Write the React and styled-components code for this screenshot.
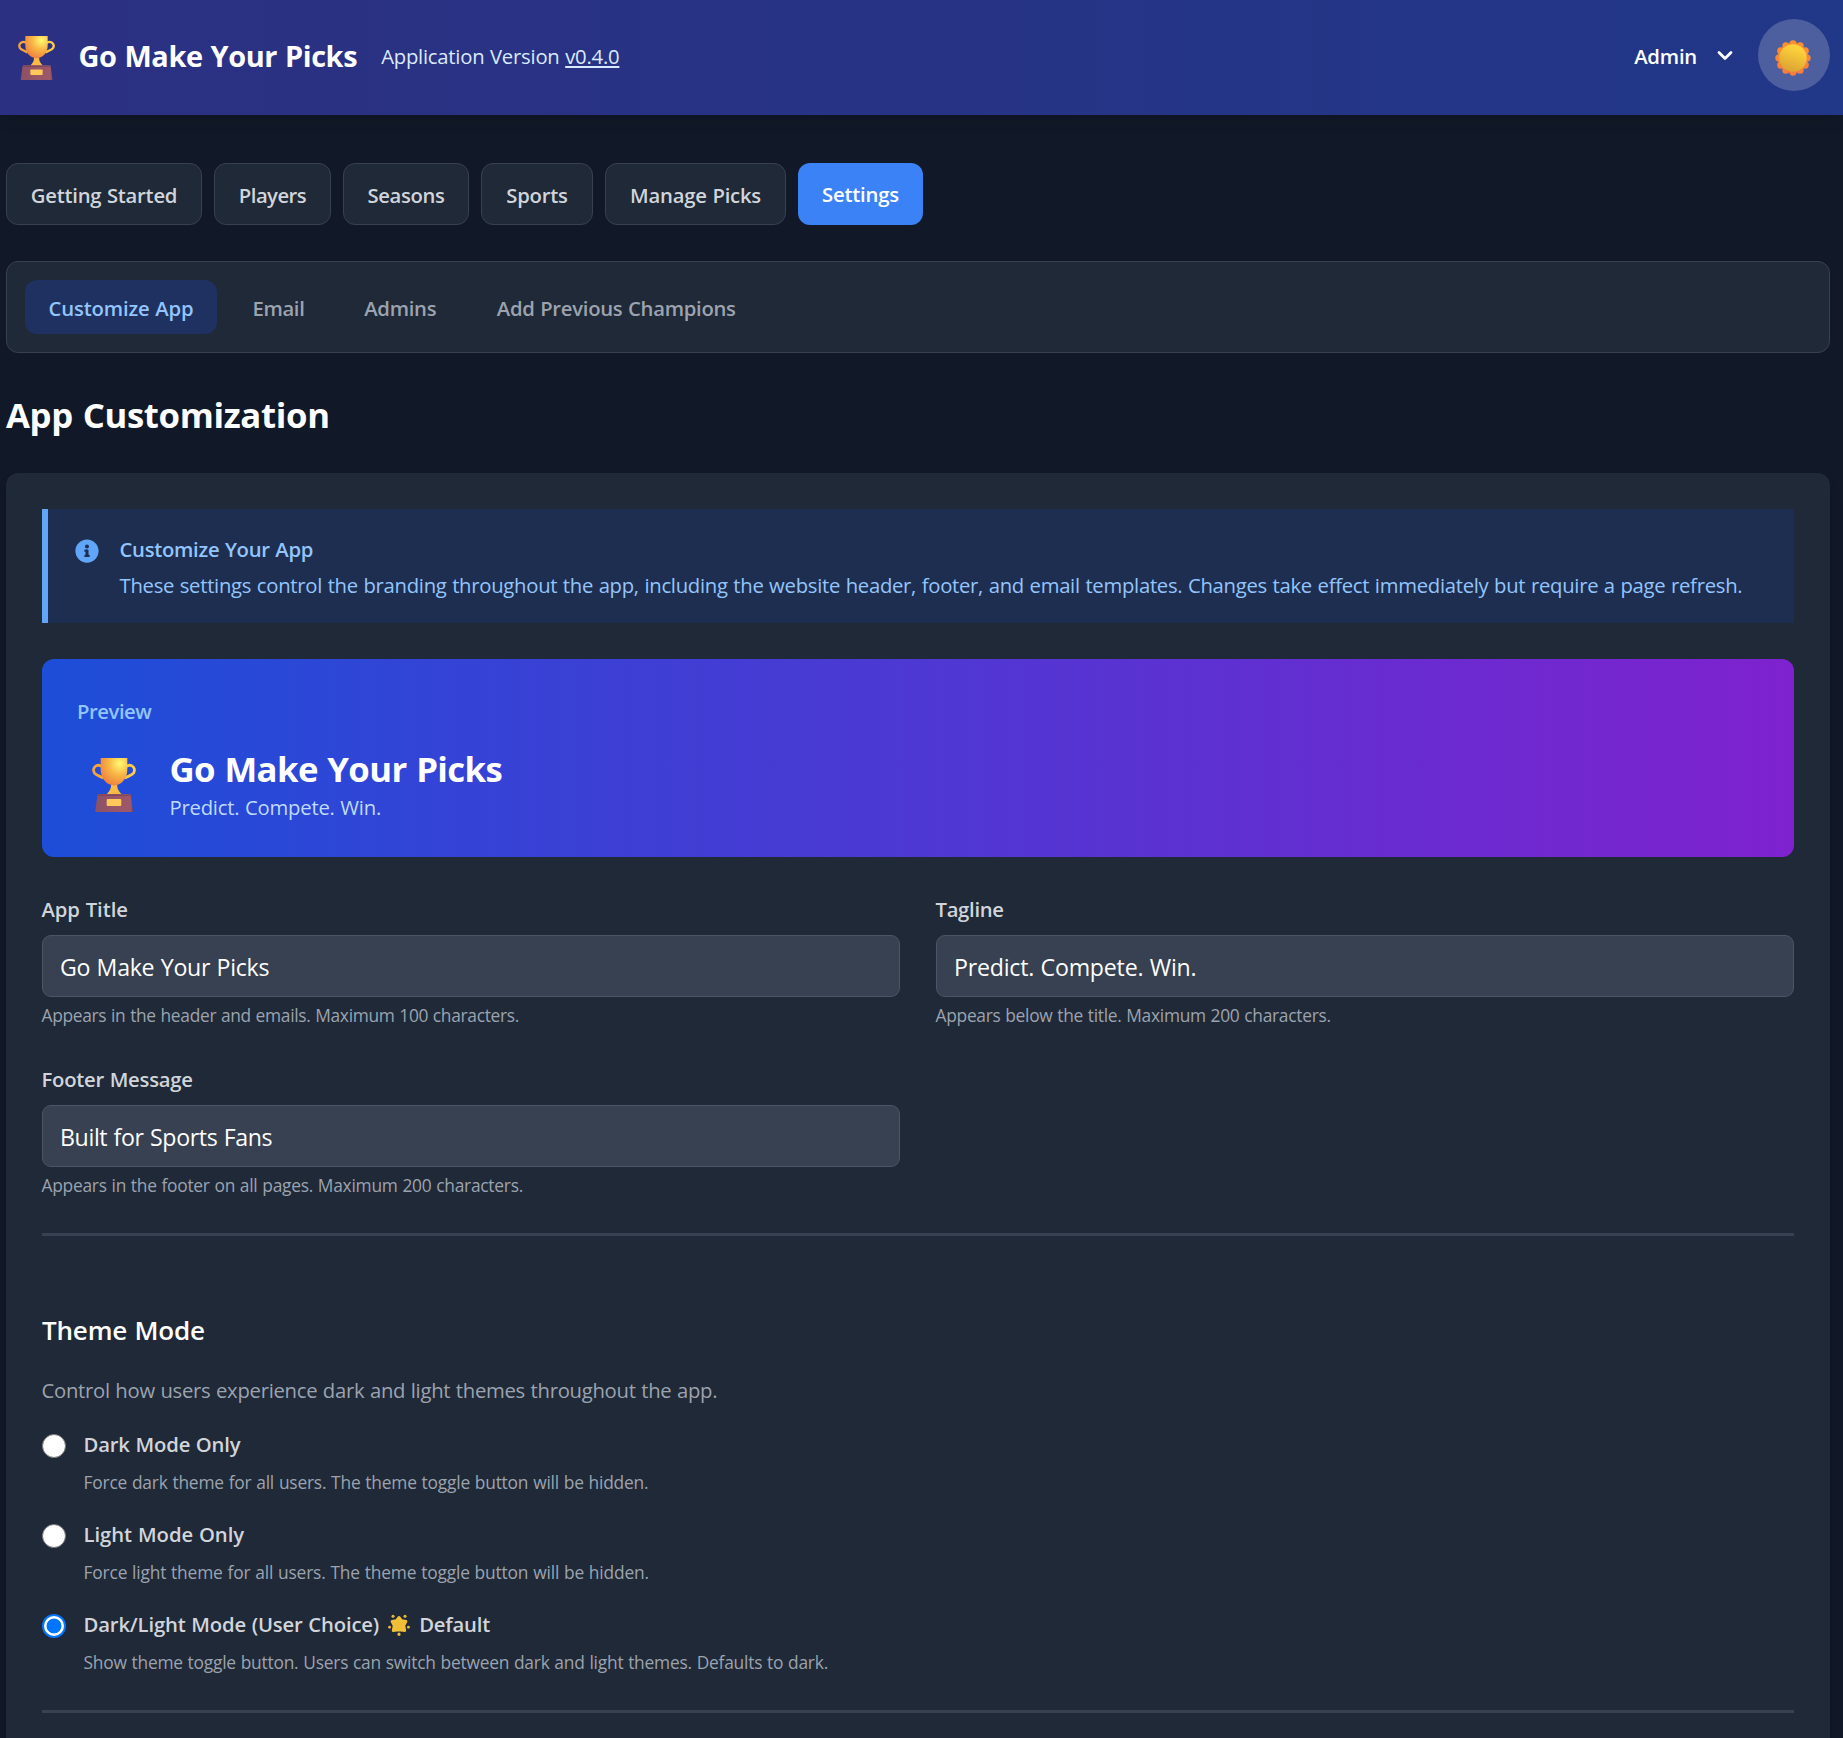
import React, { useState } from "react";
import styled, { createGlobalStyle, css } from "styled-components";
import { FaInfoCircle } from "react-icons/fa";

const GlobalStyle = createGlobalStyle`
  *, *::before, *::after { box-sizing: border-box; }
  html, body { height: 100%; }
  body {
    margin: 0;
    overflow: hidden;
    background: #111827;
    color: #fff;
    font-family: "Open Sans", "Noto Sans", sans-serif;
  }
  p, h1, h2, h3 { margin: 0; }
`;

/* Type scale */
const tracking = css`
  letter-spacing: ${(p) => p.$track ?? -0.25}px;
  word-spacing: 0.03em;
  white-space: nowrap;
`;
const textXs = css`font-size: 17.37px; line-height: 24px; ${tracking}`;
const textSm = css`font-size: 20.27px; line-height: 30px; ${tracking}`;
const textBase = css`font-size: 23.16px; line-height: 36px; ${tracking}`;
const textLg = css`font-size: 26.05px; line-height: 42px; ${tracking}`;
const textXl = css`font-size: 28.95px; line-height: 42px; ${tracking}`;
const text2xl = css`font-size: 34.74px; line-height: 48px; ${tracking}`;

/* Header */
const Header = styled.header`
  display: flex;
  align-items: center;
  justify-content: space-between;
  height: 115px;
  padding: 0 13px 5px 17px;
  background: linear-gradient(to right, #2c3082, #213788);
  box-shadow: 0 10px 15px -3px rgba(0, 0, 0, 0.07), 0 4px 6px -4px rgba(0, 0, 0, 0.07);
`;
const Brand = styled.div`
  display: flex;
  align-items: center;
`;
const BrandIcon = styled.div`
  display: flex;
  width: 61.5px;
  padding: 6px 0 0 0.5px;
`;
const BrandTitle = styled.h1`
  ${textXl}
  padding-top: 2px;
  font-weight: 700;
`;
const Version = styled.span`
  ${textSm}
  margin-left: 24px;
  padding-top: 2px;
  color: #dbeafe;
  u {
    text-decoration-thickness: 2px;
    text-underline-offset: 2px;
  }
`;
const HeaderActions = styled.div`
  display: flex;
  align-items: center;
`;
const AdminMenu = styled.button`
  ${textSm}
  display: flex;
  align-items: center;
  gap: 20px;
  margin-right: 25px;
  padding: 2px 0 0;
  border: 0;
  background: none;
  color: #fff;
  font-family: inherit;
  font-weight: 600;
  svg { margin-top: -2px; }
`;
const ThemeToggle = styled.button`
  display: flex;
  align-items: center;
  justify-content: center;
  width: 72px;
  height: 72px;
  padding: 5px 2px 0 0;
  border: 0;
  border-radius: 50%;
  background: rgba(255, 255, 255, 0.2);
`;

/* Navigation */
const Main = styled.main`
  padding: 48px 13px 0 6px;
`;
const Nav = styled.nav`
  display: flex;
  gap: 12px;
`;
const NavButton = styled.button`
  ${textSm}
  display: flex;
  align-items: center;
  justify-content: center;
  width: ${(p) => p.$width}px;
  height: 62px;
  padding: ${(p) => (p.$active ? 0 : "2px 0 0")};
  border: ${(p) => (p.$active ? "0" : "1px solid #374151")};
  border-radius: 12px;
  background: ${(p) => (p.$active ? "#3b82f6" : "#1f2937")};
  color: ${(p) => (p.$active ? "#fff" : "#d1d5db")};
  font-family: inherit;
  font-weight: 600;
`;
const SubNav = styled.nav`
  display: flex;
  gap: 12px;
  height: 92px;
  margin-top: 36px;
  padding: 18px;
  border: 1px solid #374151;
  border-radius: 12px;
  background: #1f2937;
`;
const SubTab = styled.button`
  ${textSm}
  display: flex;
  align-items: center;
  justify-content: center;
  width: ${(p) => p.$width}px;
  height: 54px;
  padding: 1.5px 0 0;
  border: 0;
  border-radius: 12px;
  background: ${(p) => (p.$active ? "rgba(30, 58, 138, 0.5)" : "transparent")};
  color: ${(p) => (p.$active ? "#93c5fd" : "#9ca3af")};
  font-family: inherit;
  font-weight: 600;
`;

/* Card */
const PageTitle = styled.h2`
  ${text2xl}
  margin: 38px 0 34px;
  font-weight: 700;
`;
const Card = styled.section`
  min-height: 1300px;
  padding: 36px;
  border-radius: 12px;
  background: #1f2937;
  box-shadow: 0 10px 15px -3px rgba(0, 0, 0, 0.2), 0 4px 6px -4px rgba(0, 0, 0, 0.2);
`;
const Notice = styled.div`
  display: flex;
  gap: 20.5px;
  height: 114px;
  padding: 25px 27px 0;
  border-left: 6px solid #60a5fa;
  background: rgba(30, 58, 138, 0.3);
  color: #93c5fd;
`;
const NoticeIcon = styled(FaInfoCircle)`
  flex: none;
  width: 24px;
  height: 24px;
  margin-top: 5px;
  color: #60a5fa;
`;
const NoticeTitle = styled.p`
  ${textSm}
  margin-bottom: 6px;
  font-weight: 600;
`;
const NoticeText = styled.p`
  ${textSm}
`;
const Preview = styled.div`
  height: 198px;
  margin-top: 36px;
  padding: 37px 35px;
  border-radius: 12px;
  background: linear-gradient(to right, #1d4ed8, #7e22ce);
`;
const PreviewLabel = styled.p`
  ${textSm}
  margin-bottom: 18px;
  color: #93c5fd;
  font-weight: 600;
`;
const PreviewRow = styled.div`
  display: flex;
  gap: 33.5px;
  padding-left: 15px;
  svg { margin-top: 14px; }
`;
const PreviewTitle = styled.p`
  ${text2xl}
  padding-top: 1px;
  margin-bottom: -1px;
  font-weight: 700;
`;
const PreviewTagline = styled.p`
  ${textSm}
  color: #bfdbfe;
`;

/* Form */
const FieldGrid = styled.div`
  display: grid;
  grid-template-columns: 1fr 1fr;
  gap: 37px 36px;
  margin-top: 37px;
`;
const Field = styled.div`
  display: flex;
  flex-direction: column;
`;
const Label = styled.label`
  ${textSm}
  margin: 0 0 11px -0.5px;
  color: #d1d5db;
  font-weight: 600;
`;
const Input = styled.input`
  ${textBase}
  width: 100%;
  height: 62px;
  padding: 2px 17px 0;
  border: 1px solid #4b5563;
  border-radius: 9px;
  outline: 0;
  background: #374151;
  color: #fff;
  font-family: inherit;
`;
const Hint = styled.p`
  ${textXs}
  margin: 6px 0 0 -0.5px;
  color: #9ca3af;
`;
const Divider = styled.hr`
  height: 3px;
  margin: 36px 0 0;
  border: 0;
  background: #374151;
`;
const SectionTitle = styled.h3`
  ${textLg}
  margin-top: 73px;
  font-weight: 600;
`;
const SectionText = styled.p`
  ${textSm}
  margin: 24px 0 0 -0.5px;
  color: #9ca3af;
`;
const OptionList = styled.div`
  display: flex;
  flex-direction: column;
  gap: 25px;
  margin-top: 24px;
`;
const Option = styled.label`
  display: grid;
  grid-template-columns: 24px 1fr;
  column-gap: 17.5px;
`;
const Radio = styled.input`
  appearance: none;
  width: 24px;
  height: 24px;
  margin: 5px 0 0;
  border: 1.5px solid #767676;
  border-radius: 50%;
  background: #fff;
  &:checked {
    border: 2px solid #0075ff;
    background: radial-gradient(circle, #0075ff 7px, #fff 7.8px);
  }
`;
const OptionTitle = styled.div`
  ${textSm}
  display: flex;
  color: #d1d5db;
  font-weight: 600;
  svg { margin: 5px 9px 0; }
`;
const OptionHint = styled.p`
  ${textXs}
  margin-top: 11px;
  color: #9ca3af;
`;

function Trophy({ id, width, height }) {
  const cup = `${id}-cup`;
  const handle = `${id}-handle`;
  const base = `${id}-base`;
  return (
    <svg width={width} height={height} viewBox="0 0 44 54" preserveAspectRatio="none">
      <defs>
        <radialGradient id={cup} cx="0.72" cy="0.2" r="0.85">
          <stop offset="0" stopColor="#fffb72" />
          <stop offset="0.5" stopColor="#f8b545" />
          <stop offset="1" stopColor="#ef8040" />
        </radialGradient>
        <linearGradient id={handle} x1="0" x2="1">
          <stop offset="0" stopColor="#f3a23a" />
          <stop offset="1" stopColor="#ffce48" />
        </linearGradient>
        <linearGradient id={base} x1="0" x2="1">
          <stop offset="0" stopColor="#8b5066" />
          <stop offset="0.5" stopColor="#985668" />
          <stop offset="0.93" stopColor="#9d5869" />
          <stop offset="1" stopColor="#80475d" />
        </linearGradient>
      </defs>
      <path
        d="M10 8.6C8 7 5.8 6.9 4 7.9C1.3 9.4 1 12.6 2.4 14.9C4 17.4 8.2 18 11.4 20.2M34 8.6C36 7 38.2 6.9 40 7.9C42.7 9.4 43 12.6 41.6 14.9C40 17.4 35.8 18 32.6 20.2"
        fill="none"
        stroke={`url(#${handle})`}
        strokeWidth="2.8"
      />
      <path d="M19 26H25.2C25 31 26.4 32.6 30 36.5H14.4C17.8 32.6 19.2 31 19 26Z" fill="#f9bb42" />
      <path d="M8.7 0H35.3V12C35.3 21 28.8 27.4 22 27.4C15.2 27.4 8.7 21 8.7 12Z" fill={`url(#${cup})`} />
      <path d="M7 36H37.2Q38.6 36 38.9 37.4L41 54H3.2L5.3 37.4Q5.6 36 7 36Z" fill={`url(#${base})`} />
      <path d="M6 37.2H38.2" stroke="#7c4159" strokeWidth="1" />
      <rect x="14.7" y="41" width="14.6" height="7" rx="1" fill="#ffc85a" />
    </svg>
  );
}

function Sun() {
  const petals = Array.from({ length: 12 }, (_, i) => (i * Math.PI) / 6);
  return (
    <svg width="36" height="36" viewBox="0 0 36 36">
      <defs>
        <linearGradient id="sun-disc" x1="0.7" y1="0" x2="0.35" y2="1">
          <stop offset="0.1" stopColor="#ffd43c" />
          <stop offset="1" stopColor="#dba232" />
        </linearGradient>
        <linearGradient id="sun-petal" x1="0" y1="0" x2="0" y2="36" gradientUnits="userSpaceOnUse">
          <stop offset="0" stopColor="#ff922b" />
          <stop offset="1" stopColor="#f57a42" />
        </linearGradient>
      </defs>
      <g fill="url(#sun-petal)">
        <circle cx="18" cy="18" r="15" />
        {petals.map((a) => (
          <circle key={a} cx={18 + 14.1 * Math.sin(a)} cy={18 - 14.1 * Math.cos(a)} r="3.6" />
        ))}
      </g>
      <circle cx="18" cy="18" r="13.7" fill="url(#sun-disc)" />
    </svg>
  );
}

function GlowingStar() {
  return (
    <svg width="22" height="22" viewBox="0 0 22 22">
      <g fill="#f0bd38">
        <path
          d="M11 3.4L13.6 6.6L18 7.4L15.8 11.6L16.8 16.6L11 15.8L5.2 16.6L6.2 11.6L4 7.4L8.4 6.6Z"
          stroke="#f0c038"
          strokeWidth="2.8"
          strokeLinejoin="round"
        />
        <circle cx="5" cy="2.2" r="1.5" />
        <circle cx="17" cy="2.2" r="1.5" />
        <circle cx="1.6" cy="13.2" r="1.4" />
        <circle cx="20.4" cy="13.2" r="1.4" />
        <ellipse cx="11" cy="20.2" rx="1.5" ry="1.7" />
      </g>
    </svg>
  );
}

function Chevron() {
  return (
    <svg width="16" height="11" viewBox="0 0 16 11">
      <path
        d="M2 2.4L8 8.4L14 2.4"
        fill="none"
        stroke="#fff"
        strokeWidth="2.8"
        strokeLinecap="round"
        strokeLinejoin="round"
      />
    </svg>
  );
}

const sections = [
  { name: "Getting Started", width: 196, track: -0.24 },
  { name: "Players", width: 117, track: -0.52 },
  { name: "Seasons", width: 126, track: -0.35 },
  { name: "Sports", width: 112, track: -0.25 },
  { name: "Manage Picks", width: 181, track: -0.2 },
  { name: "Settings", width: 125, track: -0.18 },
];

const settingsTabs = [
  { name: "Customize App", width: 192, track: -0.15 },
  { name: "Email", width: 99, track: -0.35 },
  { name: "Admins", width: 120.5, track: -0.3 },
  { name: "Add Previous Champions", width: 287.5, track: -0.28 },
];

const fields = [
  { id: "title", label: "App Title", labelTrack: -0.07, value: "Go Make Your Picks", track: -0.29, hint: "Appears in the header and emails. Maximum 100 characters.", hintTrack: -0.31 },
  { id: "tagline", label: "Tagline", labelTrack: -0.3, value: "Predict. Compete. Win.", track: -0.22, hint: "Appears below the title. Maximum 200 characters.", hintTrack: -0.28 },
  { id: "footer", label: "Footer Message", labelTrack: -0.24, value: "Built for Sports Fans", track: -0.37, hint: "Appears in the footer on all pages. Maximum 200 characters.", hintTrack: -0.25 },
];

const modes = [
  { id: "dark", title: "Dark Mode Only", track: -0.17, hintTrack: -0.2, hint: "Force dark theme for all users. The theme toggle button will be hidden." },
  { id: "light", title: "Light Mode Only", track: -0.04, hintTrack: -0.17, hint: "Force light theme for all users. The theme toggle button will be hidden." },
  { id: "both", title: "Dark/Light Mode (User Choice)", track: -0.16, hintTrack: -0.22, isDefault: true, hint: "Show theme toggle button. Users can switch between dark and light themes. Defaults to dark." },
];

export default function App() {
  const [section, setSection] = useState("Settings");
  const [tab, setTab] = useState("Customize App");
  const [mode, setMode] = useState("both");
  return (
    <>
      <GlobalStyle />
      <Header>
        <Brand>
          <BrandIcon>
            <Trophy id="brand" width={37} height={44} />
          </BrandIcon>
          <BrandTitle $track={-0.42}>Go Make Your Picks</BrandTitle>
          <Version $track={-0.23}>
            Application Version <u>v0.4.0</u>
          </Version>
        </Brand>
        <HeaderActions>
          <AdminMenu $track={-0.2}>
            Admin
            <Chevron />
          </AdminMenu>
          <ThemeToggle aria-label="Toggle theme">
            <Sun />
          </ThemeToggle>
        </HeaderActions>
      </Header>
      <Main>
        <Nav>
          {sections.map((s) => (
            <NavButton key={s.name} $width={s.width} $track={s.track} $active={s.name === section} onClick={() => setSection(s.name)}>
              {s.name}
            </NavButton>
          ))}
        </Nav>
        <SubNav>
          {settingsTabs.map((t) => (
            <SubTab key={t.name} $width={t.width} $track={t.track} $active={t.name === tab} onClick={() => setTab(t.name)}>
              {t.name}
            </SubTab>
          ))}
        </SubNav>
        <PageTitle $track={-0.34}>App Customization</PageTitle>
        <Card>
          <Notice>
            <NoticeIcon />
            <div>
              <NoticeTitle $track={-0.28}>Customize Your App</NoticeTitle>
              <NoticeText $track={-0.275}>
                These settings control the branding throughout the app, including the website header, footer, and email templates. Changes take effect immediately but require a page refresh.
              </NoticeText>
            </div>
          </Notice>
          <Preview>
            <PreviewLabel $track={-0.45}>Preview</PreviewLabel>
            <PreviewRow>
              <Trophy id="preview" width={44} height={54} />
              <div>
                <PreviewTitle $track={-0.6}>Go Make Your Picks</PreviewTitle>
                <PreviewTagline $track={-0.22}>Predict. Compete. Win.</PreviewTagline>
              </div>
            </PreviewRow>
          </Preview>
          <FieldGrid>
            {fields.map((f) => (
              <Field key={f.id}>
                <Label htmlFor={f.id} $track={f.labelTrack}>{f.label}</Label>
                <Input id={f.id} defaultValue={f.value} $track={f.track} />
                <Hint $track={f.hintTrack}>{f.hint}</Hint>
              </Field>
            ))}
          </FieldGrid>
          <Divider />
          <SectionTitle $track={-0.2}>Theme Mode</SectionTitle>
          <SectionText $track={-0.28}>
            Control how users experience dark and light themes throughout the app.
          </SectionText>
          <OptionList>
            {modes.map((m) => (
              <Option key={m.id}>
                <Radio type="radio" name="mode" checked={mode === m.id} onChange={() => setMode(m.id)} />
                <div>
                  <OptionTitle $track={m.track}>
                    {m.title}
                    {m.isDefault && (
                      <>
                        <GlowingStar />
                        Default
                      </>
                    )}
                  </OptionTitle>
                  <OptionHint $track={m.hintTrack}>{m.hint}</OptionHint>
                </div>
              </Option>
            ))}
          </OptionList>
          <Divider />
        </Card>
      </Main>
    </>
  );
}
